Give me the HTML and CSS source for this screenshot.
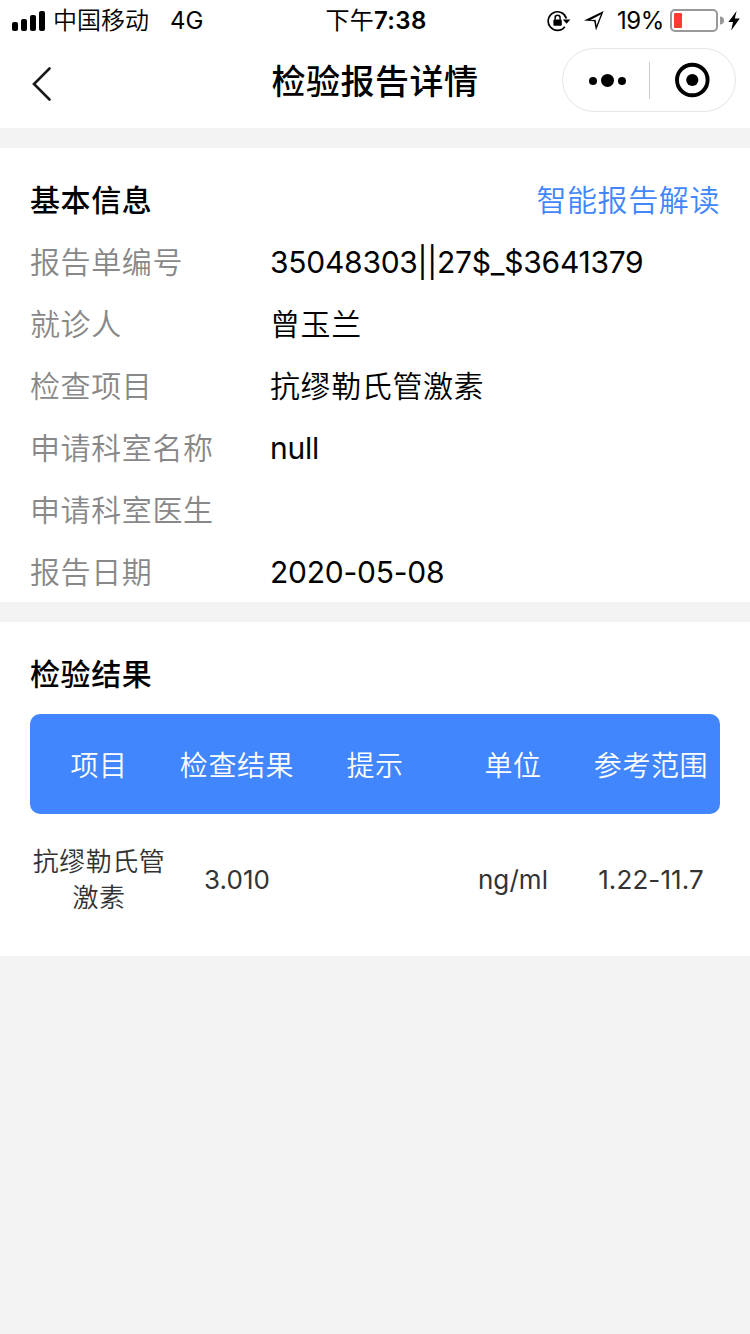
FILE: index.html
```
<!DOCTYPE html>
<html lang="zh-CN">

	<head>
		<meta charset="UTF-8">
		<title>检验报告详情</title>
		<link rel="stylesheet" href="styles.css">
	</head>

	<body>
		<!--状态栏-->
		<div class="status">
			<div class="left">
				<svg class="signal" width="34" height="20" viewBox="0 0 34 20">
					<rect x="0" y="11" width="6" height="9" rx="2" />
					<rect x="9" y="8" width="6" height="12" rx="2" />
					<rect x="18" y="4" width="6" height="16" rx="2" />
					<rect x="27" y="0" width="6" height="20" rx="2" />
				</svg>
				<span class="carrier">中国移动</span>
				<span class="net">4G</span>
			</div>
			<div class="time">下午<b>7:38</b></div>
			<div class="right">
				<svg class="lock" width="24" height="22" viewBox="0 0 24 22">
					<path d="M19.4 8.5A9.3 9.3 0 1 0 17.8 16.8" fill="none" stroke="#000" stroke-width="1.7" />
					<path d="M15.8 9.4h7.6l-3.8 4.4z" />
					<rect x="6.4" y="9.6" width="8.4" height="6.2" rx="1" />
					<path d="M8.1 9.8V7.8a2.5 2.5 0 0 1 5 0v2" fill="none" stroke="#000" stroke-width="1.5" />
				</svg>
				<svg class="arrow" width="20" height="20" viewBox="0 0 20 20">
					<path d="M0 9.6L19.6 0L12 19.6L10.2 10.2zM6 9.2L11.6 8.8L12.5 14.4L16.8 3.5z" fill-rule="evenodd" />
				</svg>
				<span class="percent">19%</span>
				<svg class="battery" width="54" height="24" viewBox="0 0 54 24">
					<rect x="1" y="1" width="46" height="21" rx="4" fill="none" stroke="#999" stroke-width="2" />
					<rect x="4" y="4" width="8" height="15" rx="1" fill="#ff3b30" />
					<path d="M50 7.5a4 4 0 0 1 0 8z" fill="#999" />
				</svg>
				<svg class="flash" width="12" height="20" viewBox="0 0 12 20">
					<path d="M8.6 0L0.4 11H5L3.2 19.6L11.8 7.6H6.8z" />
				</svg>
			</div>
		</div>
		<!--导航栏-->
		<div class="nav">
			<svg class="back" width="20" height="36" viewBox="0 0 20 36">
				<path d="M17.5 2.5L2 18L17.5 33.5" fill="none" stroke="#1a1a1a" stroke-width="2.6" stroke-linecap="round" />
			</svg>
			<h1>检验报告详情</h1>
			<div class="capsule">
				<svg class="dots" width="38" height="14" viewBox="0 0 38 14">
					<circle cx="4" cy="8" r="4" />
					<circle cx="18.5" cy="7.4" r="6.5" />
					<circle cx="33" cy="8" r="4" />
				</svg>
				<span class="line"></span>
				<svg class="exit" width="36" height="36" viewBox="0 0 36 36">
					<circle cx="18.3" cy="18" r="15.3" fill="none" stroke="#000" stroke-width="3.9" />
					<circle cx="18.3" cy="18" r="6.1" />
				</svg>
			</div>
		</div>
		<!--基本信息-->
		<div class="info">
			<div class="row">
				<h2>基本信息</h2>
				<a class="read">智能报告解读</a>
			</div>
			<div class="row">
				<span class="label">报告单编号</span>
				<span class="value number">35048303||27$_$3641379</span>
			</div>
			<div class="row">
				<span class="label">就诊人</span>
				<span class="value">曾玉兰</span>
			</div>
			<div class="row">
				<span class="label">检查项目</span>
				<span class="value">抗缪勒氏管激素</span>
			</div>
			<div class="row">
				<span class="label">申请科室名称</span>
				<span class="value number">null</span>
			</div>
			<div class="row">
				<span class="label">申请科室医生</span>
				<span class="value"></span>
			</div>
			<div class="row">
				<span class="label">报告日期</span>
				<span class="value number">2020-05-08</span>
			</div>
		</div>
		<!--检验结果-->
		<div class="result">
			<h2>检验结果</h2>
			<div class="thead">
				<span>项目</span>
				<span>检查结果</span>
				<span>提示</span>
				<span>单位</span>
				<span>参考范围</span>
			</div>
			<div class="tr">
				<span class="name">抗缪勒氏管激素</span>
				<span>3.010</span>
				<span></span>
				<span>ng/ml</span>
				<span>1.22-11.7</span>
			</div>
		</div>
	</body>

</html>
```
FILE: styles.css
```
* {
	margin: 0;
	padding: 0;
	box-sizing: border-box;
}

body {
	background: #f3f3f3;
	color: #000;
	font-family: Inter, "Noto Sans CJK SC", sans-serif;
	font-size: 30px;
}

svg {
	display: block;
	flex: none;
}

/*状态栏*/
.status {
	display: grid;
	grid-template-columns: 1fr auto 1fr;
	align-items: center;
	height: 40px;
	padding: 1px 10px 0 12px;
	background: #fff;
	font-size: 24px;
	line-height: 40px;
	white-space: nowrap;
}

.status .left,
.status .right {
	display: flex;
	align-items: center;
}

.status .right {
	justify-content: flex-end;
}

.carrier {
	margin-left: 7px;
	font-weight: 350;
}

.net {
	margin-left: 21px;
}

.time {
	letter-spacing: 0.3px;
}

.time b {
	font-weight: 600;
}

.signal,
.lock,
.arrow {
	margin-top: -1px;
}

.arrow {
	margin-left: 13px;
}

.percent {
	margin-left: 13px;
	letter-spacing: -0.4px;
}

.battery {
	margin-left: 6px;
}

.flash {
	margin-left: 4px;
}

/*导航栏*/
.nav {
	display: grid;
	grid-template-columns: 1fr auto 1fr;
	align-items: center;
	height: 88px;
	padding: 0 14px 8px;
	background: #fff;
}

.nav .back {
	margin: 8px 0 0 18px;
}

.nav h1 {
	padding-top: 3px;
	font-size: 34px;
	font-weight: 500;
	line-height: 77px;
	letter-spacing: 0.5px;
}

.capsule {
	display: flex;
	align-items: center;
	justify-self: end;
	width: 174px;
	height: 64px;
	padding-left: 26px;
	border: 1px solid #e5e5e5;
	border-radius: 32px;
}

.capsule .line {
	width: 1px;
	height: 37px;
	margin: 0 24px 0 22px;
	background: #ccc;
}

/*基本信息*/
.info {
	margin-top: 20px;
	padding: 20px 30px 0;
	background: #fff;
}

.row {
	display: flex;
	height: 62px;
	line-height: 64px;
	letter-spacing: 0.6px;
}

h2 {
	height: 62px;
	font-size: 30px;
	font-weight: 500;
	line-height: 64px;
	letter-spacing: 0.6px;
}

.read {
	margin-left: auto;
	color: #4186fc;
	font-weight: 350;
}

.label {
	width: 240px;
	color: #888;
	font-weight: 350;
}

.value {
	font-weight: 350;
}

.number {
	font-weight: 400;
	letter-spacing: -0.25px;
}

/*检验结果*/
.result {
	height: 334px;
	margin-top: 20px;
	padding: 20px 30px 0;
	background: #fff;
}

.thead,
.tr {
	display: grid;
	grid-template-columns: repeat(5, 138px);
	align-items: center;
	text-align: center;
}

.thead {
	height: 100px;
	margin-top: 10px;
	border-radius: 10px;
	background: #4186fc;
	color: #fff;
	font-size: 28px;
	font-weight: 350;
	letter-spacing: 0.6px;
}

.tr {
	height: 130px;
	padding-top: 1px;
	color: #333;
	font-size: 26px;
	line-height: 36px;
	letter-spacing: 0.1px;
}

.tr .name {
	font-weight: 350;
	letter-spacing: 0.5px;
}
```
